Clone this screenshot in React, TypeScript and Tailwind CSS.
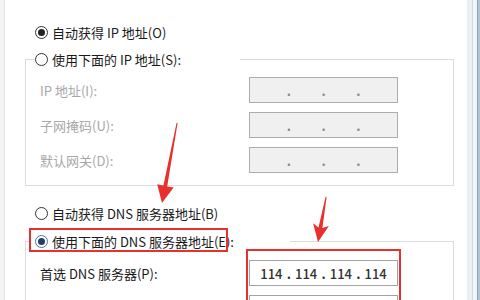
import React from 'react';

const font = { fontFamily: '"Noto Sans CJK SC", "Microsoft YaHei", sans-serif' };

// Windows-style radio button
function Radio({ checked, focus }: { checked?: boolean; focus?: boolean }) {
  return (
    <span
      className={`flex h-[13px] w-[13px] shrink-0 items-center justify-center rounded-full border bg-white ${
        focus ? 'border-[#4a72a0]' : 'border-[#333333]'
      }`}
    >
      {checked && <span className={`h-[7px] w-[7px] rounded-full ${focus ? 'bg-[#1f3f6c]' : 'bg-[#222222]'}`} />}
    </span>
  );
}

function RadioLabel({ text, checked, focus }: { text: string; checked?: boolean; focus?: boolean }) {
  return (
    <div className="flex items-center gap-[4px]">
      <Radio checked={checked} focus={focus} />
      <span className="whitespace-nowrap text-[13px] leading-none text-[#1a1a1a]">{text}</span>
    </div>
  );
}

function IpField({ parts, disabled }: { parts: string[]; disabled?: boolean }) {
  return (
    <div
      className={`flex h-[26px] w-[149px] shrink-0 items-center border px-[4px] ${
        disabled ? 'border-[#adadad] bg-[#f0f0f0] text-[#8a8a8a]' : 'border-[#a3a3a3] bg-white text-[#333333]'
      }`}
    >
      {parts.map((p, i) => (
        <React.Fragment key={i}>
          {i > 0 && (
            <span className="flex w-0 justify-center text-[13px] font-semibold leading-none">.</span>
          )}
          <span className="flex-1 text-center text-[13px] font-medium leading-none">{p}</span>
        </React.Fragment>
      ))}
    </div>
  );
}

function FieldRow({ label, parts, disabled }: { label: string; parts: string[]; disabled?: boolean }) {
  return (
    <div className="flex h-[26px] shrink-0 items-center">
      <span
        className={`w-[209px] shrink-0 whitespace-nowrap text-[13px] leading-none ${
          disabled ? 'text-[#a8a8a8]' : 'text-[#1a1a1a]'
        }`}
      >
        {label}
      </span>
      <IpField parts={parts} disabled={disabled} />
    </div>
  );
}

const empty = ['', '', '', ''];

export default function App() {
  return (
    <div className="relative flex h-[300px] w-[480px] overflow-hidden bg-white" style={font}>
      {/* left window edge */}
      <div className="w-[5px] shrink-0 border-r border-[#e3e3e3] bg-[#f4f4f4]" />

      {/* dialog body */}
      <div className="flex flex-1 flex-col pl-[20px] pr-[13px] pt-[20px]">
        <div className="flex h-[24px] shrink-0 items-center pl-[10px]">
          <RadioLabel text="自动获得 IP 地址(O)" checked />
        </div>

        {/* IP group */}
        <div className="mt-[3px] flex h-[24px] shrink-0">
          <div className="h-[12px] w-[10px] self-end border-l border-t border-[#dcdcdc]" />
          <div className="flex w-[205px] items-center">
            <RadioLabel text="使用下面的 IP 地址(S):" />
          </div>
          <div className="h-[12px] flex-1 self-end border-r border-t border-[#dcdcdc]" />
        </div>
        <div className="flex shrink-0 flex-col gap-[9px] border-x border-b border-[#dcdcdc] pb-[12px] pl-[14px] pt-[6px]">
          <FieldRow label="IP 地址(I):" parts={empty} disabled />
          <FieldRow label="子网掩码(U):" parts={empty} disabled />
          <FieldRow label="默认网关(D):" parts={empty} disabled />
        </div>

        <div className="mt-[15px] flex h-[24px] shrink-0 items-center pl-[10px]">
          <RadioLabel text="自动获得 DNS 服务器地址(B)" />
        </div>

        {/* DNS group */}
        <div className="mt-[4px] flex h-[24px] shrink-0">
          <div className="h-[12px] w-[4px] self-end border-l border-t border-[#dcdcdc]" />
          <div className="relative flex w-[261px] items-center pl-[6px]">
            <RadioLabel text="使用下面的 DNS 服务器地址(E):" checked focus />
            <div className="absolute -top-[1px] left-0 h-[24px] w-[199px] border-2 border-[#e8302c]" />
          </div>
          <div className="h-[12px] flex-1 self-end border-r border-t border-[#dcdcdc]" />
        </div>
        <div className="flex shrink-0 flex-col border-x border-[#dcdcdc] pl-[14px] pt-[7px]">
          <div className="relative flex flex-col gap-[9px]">
            <FieldRow label="首选 DNS 服务器(P):" parts={['114', '114', '114', '114']} />
            <FieldRow label="备用 DNS 服务器(A):" parts={empty} />
            <div className="absolute -bottom-[3px] -top-[11px] left-[206px] w-[155px] border-2 border-[#e8302c]" />
          </div>
        </div>
      </div>

      {/* right window edge */}
      <div className="flex w-[13px] shrink-0">
        <div className="w-[5px] bg-[#e9eff5]" />
        <div className="w-[1px] bg-[#cfdbe6]" />
        <div className="w-[4px] bg-[#f3f6f9]" />
        <div className="w-[1px] bg-[#7aa6cf]" />
        <div className="w-[2px] bg-[#b5c3d0]" />
      </div>

      {/* annotation arrows */}
      <svg className="pointer-events-none absolute inset-0" width="480" height="300" viewBox="0 0 480 300">
        <polygon
          fill="#e8302c"
          points="177.6,123 167.2,186.4 173.6,187.4 162,203 157.2,184.2 163.4,185.6 176.6,122.8"
        />
        <polygon
          fill="#e8302c"
          points="326.6,197 322.4,228 328.9,226 318,242 313.1,223.2 318.5,227.4 325.6,196.8"
        />
      </svg>
    </div>
  );
}
